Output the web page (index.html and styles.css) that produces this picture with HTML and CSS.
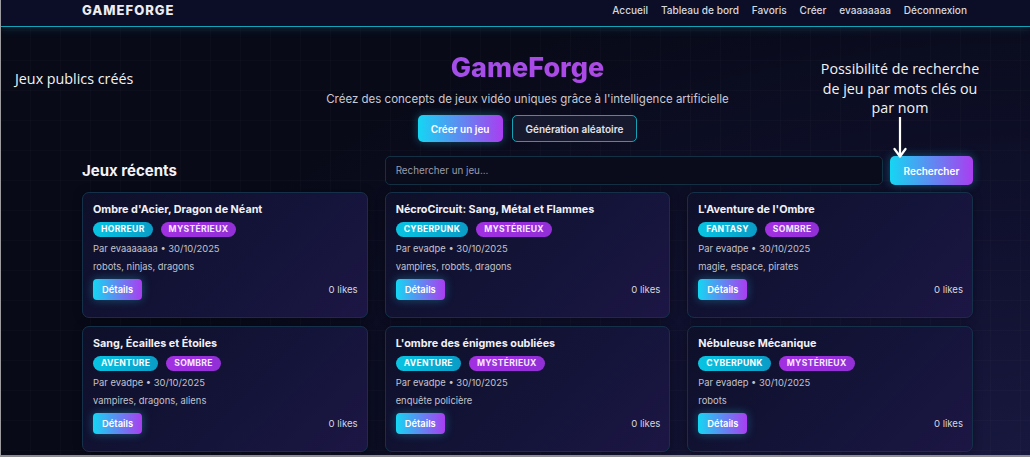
FILE: index.html
```html
<!DOCTYPE html>
<html lang="fr">
<head>
<meta charset="utf-8">
<title>GameForge</title>
<link rel="stylesheet" href="styles.css">
</head>
<body>
<header class="topbar">
  <div class="topbar-inner">
    <span class="logo">GAMEFORGE</span>
    <nav class="nav">
      <a>Accueil</a>
      <a>Tableau de bord</a>
      <a>Favoris</a>
      <a>Créer</a>
      <a>evaaaaaaa</a>
      <a>Déconnexion</a>
    </nav>
  </div>
</header>
<main class="page">
  <section class="hero">
    <h1 class="hero-title">GameForge</h1>
    <p class="hero-sub">Créez des concepts de jeux vidéo uniques grâce à l'intelligence artificielle</p>
    <div class="hero-actions">
      <button class="btn btn-grad">Créer un jeu</button>
      <button class="btn btn-outline">Génération aléatoire</button>
    </div>
  </section>
  <section class="recent">
    <div class="recent-head">
      <h2 class="recent-title">Jeux récents</h2>
      <form class="search">
        <input class="search-input" type="text" placeholder="Rechercher un jeu...">
        <button class="btn btn-grad search-btn" type="button">Rechercher</button>
      </form>
    </div>
    <div class="grid">
      <article class="card">
        <h3 class="card-title">Ombre d'Acier, Dragon de Néant</h3>
        <div class="tags"><span class="tag tag-cyan">Horreur</span><span class="tag tag-purple">Mystérieux</span></div>
        <p class="meta">Par evaaaaaaa • 30/10/2025</p>
        <p class="kw">robots, ninjas, dragons</p>
        <div class="card-foot"><button class="btn btn-grad btn-sm">Détails</button><span class="likes">0 likes</span></div>
      </article>
      <article class="card">
        <h3 class="card-title">NécroCircuit: Sang, Métal et Flammes</h3>
        <div class="tags"><span class="tag tag-cyan">Cyberpunk</span><span class="tag tag-purple">Mystérieux</span></div>
        <p class="meta">Par evadpe • 30/10/2025</p>
        <p class="kw">vampires, robots, dragons</p>
        <div class="card-foot"><button class="btn btn-grad btn-sm">Détails</button><span class="likes">0 likes</span></div>
      </article>
      <article class="card">
        <h3 class="card-title">L'Aventure de l'Ombre</h3>
        <div class="tags"><span class="tag tag-cyan">Fantasy</span><span class="tag tag-purple">Sombre</span></div>
        <p class="meta">Par evadpe • 30/10/2025</p>
        <p class="kw">magie, espace, pirates</p>
        <div class="card-foot"><button class="btn btn-grad btn-sm">Détails</button><span class="likes">0 likes</span></div>
      </article>
      <article class="card">
        <h3 class="card-title">Sang, Écailles et Étoiles</h3>
        <div class="tags"><span class="tag tag-cyan">Aventure</span><span class="tag tag-purple">Sombre</span></div>
        <p class="meta">Par evadpe • 30/10/2025</p>
        <p class="kw">vampires, dragons, aliens</p>
        <div class="card-foot"><button class="btn btn-grad btn-sm">Détails</button><span class="likes">0 likes</span></div>
      </article>
      <article class="card">
        <h3 class="card-title">L'ombre des énigmes oubliées</h3>
        <div class="tags"><span class="tag tag-cyan">Aventure</span><span class="tag tag-purple">Mystérieux</span></div>
        <p class="meta">Par evadpe • 30/10/2025</p>
        <p class="kw">enquête policière</p>
        <div class="card-foot"><button class="btn btn-grad btn-sm">Détails</button><span class="likes">0 likes</span></div>
      </article>
      <article class="card">
        <h3 class="card-title">Nébuleuse Mécanique</h3>
        <div class="tags"><span class="tag tag-cyan">Cyberpunk</span><span class="tag tag-purple">Mystérieux</span></div>
        <p class="meta">Par evadep • 30/10/2025</p>
        <p class="kw">robots</p>
        <div class="card-foot"><button class="btn btn-grad btn-sm">Détails</button><span class="likes">0 likes</span></div>
      </article>
    </div>
  </section>
</main>
<div class="note note-left">Jeux publics créés</div>
<div class="note note-right">Possibilité de recherche<br>de jeu par mots clés ou<br>par nom</div>
<svg class="note-arrow" width="14" height="42" viewBox="0 0 14 42">
  <path d="M7 0 V39 M1.5 32 L7 39.5 L12.5 32" fill="none" stroke="#fff" stroke-width="2.2" stroke-linecap="round" stroke-linejoin="round"/>
</svg>
</body>
</html>
```
FILE: styles.css
```css
* { box-sizing: border-box; }
html, body { margin: 0; padding: 0; }
body {
  width: 1030px;
  height: 457px;
  overflow: hidden;
  position: relative;
  font-family: Inter, "Noto Sans", sans-serif;
  color: #fff;
  border-left: 1px solid #9b9ba0;
  border-bottom: 2px solid #8c8c92;
  background-color: #080a18;
  background-image:
    linear-gradient(rgba(255,255,255,0.014) 1px, transparent 1px),
    linear-gradient(90deg, rgba(255,255,255,0.014) 1px, transparent 1px),
    radial-gradient(ellipse 900px 500px at 100% 100%, #18183f 0%, rgba(20,20,58,0.65) 45%, rgba(8,10,24,0) 100%);
  background-size: 30px 30px, 30px 30px, 100% 100%;
}

.topbar {
  height: 27px;
  background: #0b0e26;
  border-bottom: 1px solid #12a3b6;
  box-shadow: 0 2px 10px rgba(18,163,182,0.18);
}
.topbar-inner {
  margin-left: 81px;
  width: 891px;
  display: flex;
  justify-content: space-between;
  align-items: center;
  height: 19px;
}
.logo {
  font-weight: 800;
  font-size: 13px;
  letter-spacing: 1px;
  color: #ececf2;
}
.nav { display: flex; gap: 12.8px; padding-right: 6px; }
.nav a {
  font-size: 10.1px;
  font-weight: 500;
  color: #d6d7df;
}

.page {
  margin-left: 81px;
  width: 891px;
}
.hero {
  padding-top: 24px;
  text-align: center;
}
.hero-title {
  margin: 0;
  font-size: 27px;
  line-height: 34px;
  font-weight: 800;
  background: linear-gradient(90deg, #8b5cf6, #c63bd8);
  -webkit-background-clip: text;
  background-clip: text;
  color: transparent;
}
.hero-sub {
  margin: 7px 0 0;
  font-size: 11.5px;
  line-height: 14px;
  color: #c9cad3;
}
.hero-actions {
  margin-top: 9px;
  display: flex;
  justify-content: center;
  gap: 9px;
}
.btn {
  font-family: inherit;
  border: 0;
  color: #fff;
  font-weight: 600;
  cursor: pointer;
}
.btn-grad {
  background: linear-gradient(90deg, #15d6f3, #a93ef0);
  box-shadow: 0 0 10px rgba(40,200,240,0.35);
  border-radius: 5px;
}
.hero-actions .btn {
  height: 27px;
  font-size: 10px;
  padding: 0 13px;
}
.btn-outline {
  background: #171a2e;
  border: 1px solid #15a2b4;
  border-radius: 5px;
  color: #e2e3ea;
}

.recent { margin-top: 14px; }
.recent-head,
.grid {
  display: grid;
  grid-template-columns: repeat(3, 1fr);
  column-gap: 17px;
}
.recent-head { align-items: center; }
.recent-title {
  margin: 0;
  font-size: 15px;
  font-weight: 700;
  color: #f3f3f7;
}
.search {
  grid-column: 2 / 4;
  display: flex;
  gap: 7px;
  margin: 0;
}
.search-input {
  flex: 1;
  height: 29px;
  background: #0a0c1c;
  border: 1px solid #133142;
  border-radius: 5px;
  padding: 0 10px;
  font-family: inherit;
  font-size: 9.8px;
  color: #ddd;
  outline: none;
}
.search-input::placeholder { color: #9a9cab; }
.search-btn {
  width: 83px;
  height: 29px;
  font-size: 10px;
}

.grid {
  margin-top: 7px;
  row-gap: 8px;
}
.card {
  height: 126px;
  padding: 10px 9px 0 10px;
  border: 1px solid #15314a;
  border-radius: 7px;
  background: linear-gradient(135deg, #0e1029 0%, #14143a 60%, #1c1644 100%);
  box-shadow: 0 0 8px rgba(0,0,0,0.35);
}
.card-title {
  margin: 0;
  font-size: 10.8px;
  line-height: 14px;
  font-weight: 700;
  color: #f1f1f6;
}
.tags { display: flex; gap: 8px; margin-top: 5px; }
.tag {
  height: 15px;
  line-height: 15px;
  padding: 0 8px;
  border-radius: 8px;
  font-size: 8.6px;
  font-weight: 700;
  letter-spacing: 0.3px;
  text-transform: uppercase;
  color: #fff;
}
.tag-cyan { background: linear-gradient(90deg, #08c4e2, #0a9cc6); }
.tag-purple { background: linear-gradient(90deg, #a230e2, #922fd6); color: #f4e9ff; }
.meta, .kw {
  margin: 0;
  font-size: 9.4px;
  line-height: 12px;
  color: #c2c3cd;
}
.meta { margin-top: 6px; }
.kw { margin-top: 6px; }
.card-foot {
  margin-top: 6px;
  display: flex;
  justify-content: space-between;
  align-items: center;
}
.btn-sm {
  height: 21px;
  padding: 0 9px;
  font-size: 9.4px;
  border-radius: 4px;
}
.likes {
  font-size: 9.6px;
  color: #d5d6de;
}

.note {
  position: absolute;
  font-family: "Open Sans", "Noto Sans", sans-serif;
  font-size: 14.3px;
  line-height: 19.5px;
  color: #f2f2f4;
}
.note-left { left: 14px; top: 69px; }
.note-right {
  left: 799px;
  top: 59px;
  width: 200px;
  text-align: center;
}
.note-arrow {
  position: absolute;
  left: 892px;
  top: 117px;
}
```
